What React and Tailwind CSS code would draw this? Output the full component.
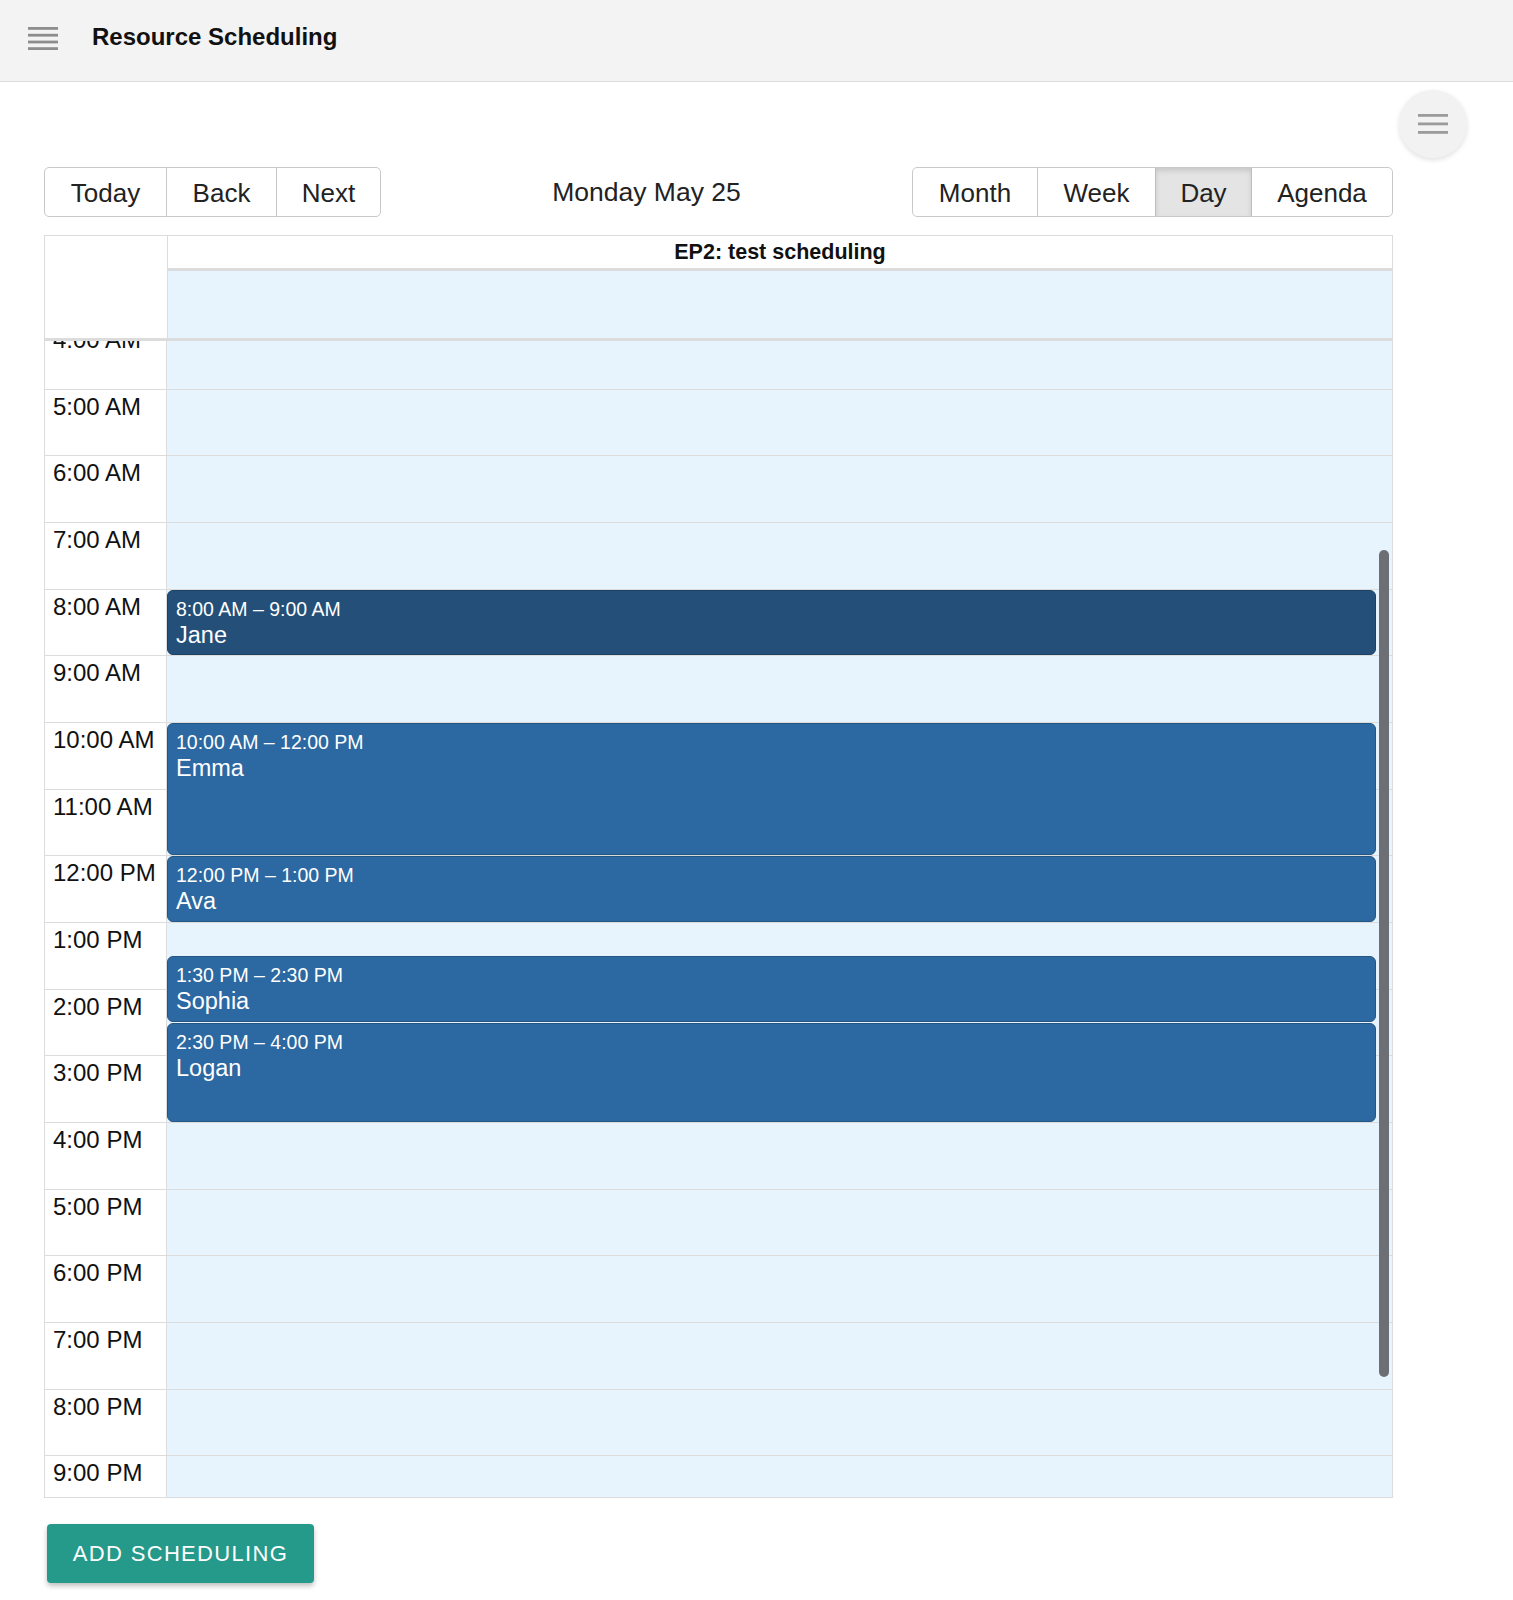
import React from "react";

const HOURS = [
  "4:00 AM", "5:00 AM", "6:00 AM", "7:00 AM", "8:00 AM", "9:00 AM", "10:00 AM", "11:00 AM",
  "12:00 PM", "1:00 PM", "2:00 PM", "3:00 PM", "4:00 PM", "5:00 PM", "6:00 PM", "7:00 PM",
  "8:00 PM", "9:00 PM",
];
const ROW = 66.67;

const EVENTS = [
  { start: 8, end: 9, time: "8:00 AM – 9:00 AM", name: "Jane", dark: true },
  { start: 10, end: 12, time: "10:00 AM – 12:00 PM", name: "Emma" },
  { start: 12, end: 13, time: "12:00 PM – 1:00 PM", name: "Ava" },
  { start: 13.5, end: 14.5, time: "1:30 PM – 2:30 PM", name: "Sophia" },
  { start: 14.5, end: 16, time: "2:30 PM – 4:00 PM", name: "Logan" },
];

function Burger({ bars = 4 }) {
  const ys = bars === 4 ? [0, 6.8, 13.6, 20.2] : [0, 8.5, 17];
  const h = bars === 4 ? 23 : 20;
  return (
    <svg width="30" height={h} viewBox={`0 0 30 ${h}`}>
      {ys.map((y) => (
        <rect key={y} x="0" y={y} width="30" height="2.8" fill="currentColor" />
      ))}
    </svg>
  );
}

export default function App() {
  return (
    <div className="min-h-[1600px] bg-white text-[#111]" style={{ fontFamily: '"Liberation Sans", Arial, sans-serif' }}>
      {/* App bar */}
      <div className="flex h-[82px] items-start border-b border-[#dcdcdc] bg-[#f3f3f3]">
        <div className="ml-[28px] mt-[27px] text-[#8d8d8d]">
          <Burger bars={4} />
        </div>
        <div className="ml-[34px] mt-[22px] text-[24px] font-bold leading-[29px] text-[#111]">Resource Scheduling</div>
      </div>

      {/* FAB row */}
      <div className="flex justify-end pr-[46px] pt-[8px]">
        <div className="flex h-[68px] w-[68px] items-center justify-center rounded-full bg-[#f2f2f2] text-[#9b9b9b] shadow-[0_2px_5px_rgba(0,0,0,0.12)]">
          <Burger bars={3} />
        </div>
      </div>

      <div className="ml-[44px] w-[1349px]">
        {/* Toolbar */}
        <div className="mt-[9px] flex h-[50px] items-center text-[26px] text-[#222]">
          <div className="flex h-full overflow-hidden rounded-[5px] border border-[#c9c9c9]">
            <div className="flex w-[122px] items-center justify-center border-r border-[#c9c9c9] pt-[2px]">Today</div>
            <div className="flex w-[110px] items-center justify-center border-r border-[#c9c9c9] pt-[2px]">Back</div>
            <div className="flex w-[103px] items-center justify-center pt-[2px]">Next</div>
          </div>
          <div className="flex-1 text-center text-[26.5px] leading-[30px]">Monday May 25</div>
          <div className="flex h-full overflow-hidden rounded-[5px] border border-[#c9c9c9]">
            <div className="flex w-[125px] items-center justify-center border-r border-[#c9c9c9] pt-[2px]">Month</div>
            <div className="flex w-[118px] items-center justify-center border-r border-[#bdbdbd] pt-[2px]">Week</div>
            <div className="flex w-[96px] items-center justify-center border-r border-[#bdbdbd] bg-[#e4e4e4] pt-[2px] shadow-[inset_0_3px_5px_rgba(0,0,0,0.12)]">Day</div>
            <div className="flex w-[140px] items-center justify-center pt-[2px]">Agenda</div>
          </div>
        </div>

        {/* Calendar */}
        <div className="mt-[18px] border border-[#dcdcdc]">
          {/* Header */}
          <div className="flex border-b-[3px] border-[#dcdcdc]">
            <div className="w-[123px] border-r border-[#dcdcdc] bg-white" />
            <div className="flex-1">
              <div className="flex h-[35px] items-center justify-center border-b-[3px] border-[#dcdcdc] bg-white text-[21.5px] font-bold">
                EP2: test scheduling
              </div>
              <div className="h-[67px] bg-[#e7f4fd]" />
            </div>
          </div>

          {/* Body */}
          <div className="relative h-[1156px] overflow-hidden">
            <div className="-mt-[18px] flex">
              <div className="w-[122px] border-r border-[#dcdcdc] bg-white">
                {HOURS.map((h) => (
                  <div key={h} className="h-[66.67px] border-b border-[#dcdcdc] pl-[8px] pt-[3px] text-[24px] leading-[27px]">
                    {h}
                  </div>
                ))}
              </div>
              <div className="relative flex-1 bg-[#e7f4fd]">
                {HOURS.map((h) => (
                  <div key={h} className="h-[66.67px] border-b border-[#dcdcdc]" />
                ))}
                {EVENTS.map((e) => (
                  <div
                    key={e.name}
                    className={
                      "absolute left-0 right-[16px] rounded-[6px] border px-[8px] pt-[7px] text-white " +
                      (e.dark ? "border-[#1c4266] bg-[#244f78]" : "border-[#245683] bg-[#2c68a1]")
                    }
                    style={{ top: (e.start - 4) * ROW, height: (e.end - e.start) * ROW - 1 }}
                  >
                    <div className="text-[19.5px] leading-[23px]">{e.time}</div>
                    <div className="mt-[1px] text-[23.5px] leading-[27px]">{e.name}</div>
                  </div>
                ))}
              </div>
            </div>
            <div className="absolute right-[3px] top-[209px] h-[827px] w-[10px] rounded-full bg-[#6c7075]" />
          </div>
        </div>

        {/* Add button */}
        <div className="ml-[3px] mt-[26px] flex h-[59px] w-[267px] items-center justify-center rounded-[4px] bg-[#25998a] text-[22px] tracking-[0.06em] text-white shadow-[0_3px_5px_rgba(0,0,0,0.25)]">
          ADD SCHEDULING
        </div>
      </div>
    </div>
  );
}
